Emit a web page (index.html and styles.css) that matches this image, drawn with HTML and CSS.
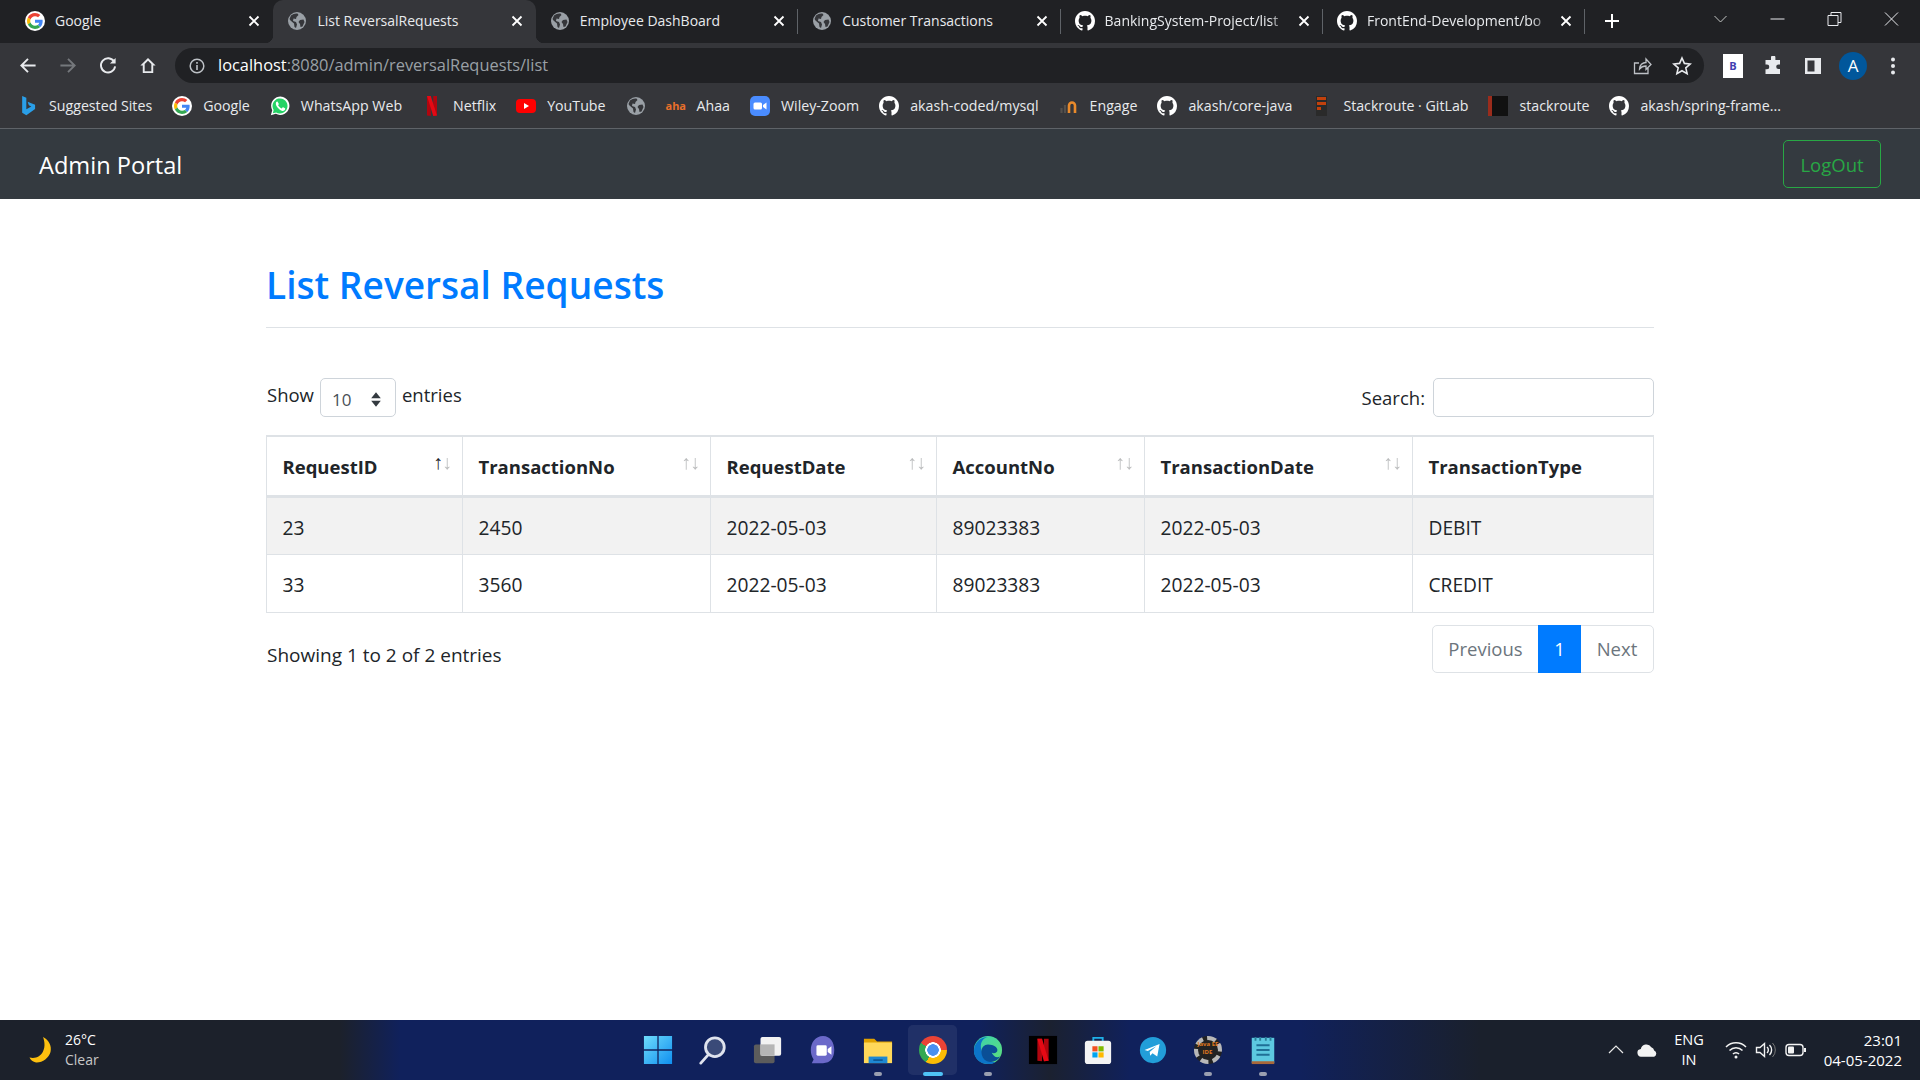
FILE: index.html
```html
<!DOCTYPE html>
<html lang="en">
<head>
<meta charset="UTF-8">
<meta name="viewport" content="width=device-width, initial-scale=1.0">
<title>List ReversalRequests</title>
<link rel="stylesheet" href="styles.css">
</head>
<body>
<svg class="defs" width="0" height="0">
    <symbol id="i-google" viewBox="-6 -6 60 60">
        <circle cx="24" cy="24" r="30" fill="#fff"/>
        <path fill="#ea4335" d="M24 9.5c3.54 0 6.71 1.22 9.21 3.6l6.85-6.85C35.9 2.38 30.47 0 24 0 14.62 0 6.51 5.38 2.56 13.22l7.98 6.19C12.43 13.72 17.74 9.5 24 9.5z"/>
        <path fill="#4285f4" d="M46.98 24.55c0-1.57-.15-3.09-.38-4.55H24v9.02h12.94c-.58 2.96-2.26 5.48-4.78 7.18l7.73 6c4.51-4.18 7.09-10.36 7.09-17.65z"/>
        <path fill="#fbbc05" d="M10.53 28.59c-.48-1.45-.76-2.99-.76-4.59s.27-3.14.76-4.59l-7.98-6.19C.92 16.46 0 20.12 0 24c0 3.88.92 7.54 2.56 10.78l7.97-6.19z"/>
        <path fill="#34a853" d="M24 48c6.48 0 11.93-2.13 15.89-5.81l-7.73-6c-2.15 1.45-4.92 2.3-8.16 2.3-6.26 0-11.57-4.22-13.47-9.91l-7.98 6.19C6.51 42.62 14.62 48 24 48z"/>
    </symbol>
    <symbol id="i-globe" viewBox="0 0 20 20">
        <circle cx="10" cy="10" r="9" fill="#9aa0a6"/>
        <path fill="#35363a" d="M4 4.5c2-1.800 4.500-2.400 6.500-2l1 1.500-2 2-.5 2-2.500-.5-.5 2.500 3 1 1 2.500-1 3.500-1.500-1-.5-3.500L3.500 9.500 2.500 8zM13 9l3.500-.5 1 2.500-2 4.500-2 .5-.5-3-1.500-2z"/>
    </symbol>
    <symbol id="i-github" viewBox="0 0 16 16">
        <path fill="#fff" d="M8 0C3.58 0 0 3.58 0 8c0 3.54 2.29 6.53 5.47 7.59.4.07.55-.17.55-.38 0-.19-.01-.82-.01-1.49-2.01.37-2.53-.49-2.69-.94-.09-.23-.48-.94-.82-1.13-.28-.15-.68-.52-.01-.53.63-.01 1.08.58 1.23.82.72 1.21 1.87.87 2.33.66.07-.52.28-.87.51-1.07-1.78-.2-3.64-.89-3.64-3.95 0-.87.31-1.59.82-2.15-.08-.2-.36-1.02.08-2.12 0 0 .67-.21 2.2.82.64-.18 1.32-.27 2-.27.68 0 1.36.09 2 .27 1.53-1.04 2.2-.82 2.2-.82.44 1.1.16 1.92.08 2.12.51.56.82 1.27.82 2.15 0 3.07-1.87 3.75-3.65 3.95.29.25.54.73.54 1.48 0 1.07-.01 1.93-.01 2.2 0 .21.15.46.55.38A8.013 8.013 0 0016 8c0-4.42-3.58-8-8-8z"/>
    </symbol>
    <symbol id="i-close" viewBox="0 0 12 12">
        <path d="M1.500 1.500l9 9M10.500 1.500l-9 9" stroke="#fff" stroke-width="1.800" fill="none"/>
    </symbol>
</svg>

<div class="browser-tabs">
    <div class="tab">
        <svg class="favicon"><use href="#i-google"/></svg>
        <span class="tab-title">Google</span>
        <svg class="tab-close"><use href="#i-close"/></svg>
    </div>
    <div class="tab tab-active">
        <svg class="favicon"><use href="#i-globe"/></svg>
        <span class="tab-title">List ReversalRequests</span>
        <svg class="tab-close"><use href="#i-close"/></svg>
    </div>
    <div class="tab tab-sep">
        <svg class="favicon"><use href="#i-globe"/></svg>
        <span class="tab-title">Employee DashBoard</span>
        <svg class="tab-close"><use href="#i-close"/></svg>
    </div>
    <div class="tab tab-sep">
        <svg class="favicon"><use href="#i-globe"/></svg>
        <span class="tab-title">Customer Transactions</span>
        <svg class="tab-close"><use href="#i-close"/></svg>
    </div>
    <div class="tab tab-sep">
        <svg class="favicon"><use href="#i-github"/></svg>
        <span class="tab-title tab-fade">BankingSystem-Project/list</span>
        <svg class="tab-close"><use href="#i-close"/></svg>
    </div>
    <div class="tab tab-sep">
        <svg class="favicon"><use href="#i-github"/></svg>
        <span class="tab-title tab-fade">FrontEnd-Development/bo</span>
        <svg class="tab-close"><use href="#i-close"/></svg>
    </div>
    <svg class="new-tab" viewBox="0 0 16 16"><path d="M8 1v14M1 8h14" stroke="#fff" stroke-width="2"/></svg>
    <div class="window-controls">
        <svg viewBox="0 0 14 14"><path d="M1 4l6 6 6-6" stroke="#c4c7c5" fill="none"/></svg>
        <svg viewBox="0 0 14 14"><path d="M0 7h14" stroke="#e8eaed"/></svg>
        <svg viewBox="0 0 14 14"><path d="M.5 3.500h10v10H.5zM3.500 3.500v-3h10v10h-3" stroke="#e8eaed" fill="none"/></svg>
        <svg viewBox="0 0 14 14"><path d="M.5.500l13 13M13.500.500l-13 13" stroke="#e8eaed" fill="none"/></svg>
    </div>
</div>

<div class="toolbar">
    <div class="nav-buttons">
        <svg viewBox="0 0 20 20"><path d="M18 10H3M10 3l-7 7 7 7" stroke="#e8eaed" stroke-width="2" fill="none"/></svg>
        <svg viewBox="0 0 20 20"><path d="M2 10h15M10 3l7 7-7 7" stroke="#75787c" stroke-width="2" fill="none"/></svg>
        <svg viewBox="0 0 20 20"><path d="M16.500 6A7.500 7.500 0 1 0 17.500 11" stroke="#e8eaed" stroke-width="2" fill="none"/><path d="M18 2v6h-6z" fill="#e8eaed"/></svg>
        <svg viewBox="0 0 20 20"><path d="M10 2L2 10h2.500v8h11v-8H18zM6.500 16V8.500L10 5l3.500 3.500V16z" fill="#e8eaed" fill-rule="evenodd"/></svg>
    </div>
    <div class="address-bar">
        <svg class="info-icon" viewBox="0 0 16 16"><circle cx="8" cy="8" r="6.800" stroke="#bdc1c6" stroke-width="1.500" fill="none"/><path d="M8 7v5M8 4v1.800" stroke="#bdc1c6" stroke-width="1.600"/></svg>
        <span class="url"><span class="url-host">localhost</span>:8080/admin/reversalRequests/list</span>
        <svg class="addr-icon" viewBox="0 0 20 20"><path d="M16 11v6.500H2.500V7H7M7.500 13c0-4 3-6.500 6.500-6.500V3l5 5.500-5 5V10c-3 0-5 1-6.500 3z" stroke="#bdc1c6" stroke-width="1.300" fill="none"/></svg>
        <svg class="addr-icon" viewBox="0 0 20 20"><path d="M10 2l2.400 5.400 5.800.6-4.400 3.900 1.300 5.700L10 14.700l-5.100 2.900 1.300-5.700L1.800 8l5.800-.6z" stroke="#e8eaed" stroke-width="1.600" fill="none"/></svg>
    </div>
    <div class="ext-buttons">
        <span class="ext-b">B</span>
        <svg viewBox="0 0 20 20"><path fill="#e8eaed" d="M8 1.500a2.200 2.200 0 0 1 4.400 0V4H17v4.500h-1.500a2.300 2.300 0 0 0 0 4.600H17V18H2.500v-4.800H4a2.300 2.300 0 0 0 0-4.600H2.500V4H8z"/></svg>
        <svg viewBox="0 0 20 20"><path fill="#e8eaed" fill-rule="evenodd" d="M2 2h16v16H2zM4.500 4.500v11h7v-11z"/></svg>
        <span class="avatar">A</span>
        <svg viewBox="0 0 20 20"><circle cx="10" cy="3.500" r="2" fill="#e8eaed"/><circle cx="10" cy="10" r="2" fill="#e8eaed"/><circle cx="10" cy="16.500" r="2" fill="#e8eaed"/></svg>
    </div>
</div>

<div class="bookmarks">
    <span class="bm"><svg viewBox="0 0 20 24"><path fill="#2a9fe8" d="M3 0l5 2v14l6-3.500-3-1.500-1.500-4 9 3.500v5L8 23l-5-3z"/></svg>Suggested Sites</span>
    <span class="bm"><svg><use href="#i-google"/></svg>Google</span>
    <span class="bm"><svg viewBox="0 0 24 24"><path fill="#fff" d="M1 23l1.700-6A11 11 0 1 1 7 21.300z"/><path fill="#25d366" d="M3.400 20.700l1-3.900A9 9 0 1 1 7.400 19.700z"/><path fill="#fff" d="M8.500 6.500c-.5 0-1.500 1-1.500 2.700s1.300 3.500 1.500 3.700c.2.300 2.500 4 6.200 5 2.200.3 3.300-1 3.500-2.200.1-.6 0-1-.2-1.100l-2.200-1.100c-.4-.1-.6 0-.8.300l-.9 1.100c-1.500-.3-3.500-2-4.400-3.800l.7-.9c.2-.3.2-.5.100-.8L9.100 7c-.1-.4-.3-.5-.6-.5z"/></svg>WhatsApp Web</span>
    <span class="bm"><svg viewBox="0 0 20 24"><path fill="#b1060f" d="M4 0h4.500v24L4 23.300zM11.500 0H16v23.300L11.500 24z"/><path fill="#e50914" d="M4 0h4.500l7.500 23.300L11.500 24z"/></svg>Netflix</span>
    <span class="bm"><svg viewBox="0 0 20 20"><rect y="3" width="20" height="14" rx="4" fill="#f00"/><path d="M8 7l5 3-5 3z" fill="#fff"/></svg>YouTube</span>
    <span class="bm"><svg><use href="#i-globe"/></svg></span>
    <span class="bm"><span class="aha-mark">aha</span>Ahaa</span>
    <span class="bm"><svg viewBox="0 0 20 20"><rect width="20" height="20" rx="5" fill="#4a8cff"/><rect x="3.500" y="6.500" width="8.500" height="7" rx="1.500" fill="#fff"/><path d="M13 9l3.500-2.500v7L13 11z" fill="#fff"/></svg>Wiley-Zoom</span>
    <span class="bm"><svg><use href="#i-github"/></svg>akash-coded/mysql</span>
    <span class="bm"><svg viewBox="0 0 20 20"><path d="M10 17V9.500a3 3 0 0 1 6 0V17" stroke="#e98a2b" stroke-width="2.600" fill="none"/><path d="M6 17V9M2.500 17v-5" stroke="#54504c" stroke-width="2.200"/></svg>Engage</span>
    <span class="bm"><svg><use href="#i-github"/></svg>akash/core-java</span>
    <span class="bm"><svg viewBox="0 0 20 20"><rect x="4" width="11" height="20" fill="#2a2a2a"/><path d="M5 1h9v3H5zM5 6h9v3H5zM5 11h4v3H5z" fill="#c2410c"/></svg>Stackroute · GitLab</span>
    <span class="bm"><svg viewBox="0 0 20 20"><rect width="20" height="20" fill="#111"/><rect width="4" height="20" fill="#9b2c1c"/></svg>stackroute</span>
    <span class="bm"><svg><use href="#i-github"/></svg>akash/spring-frame...</span>
</div>

<nav class="navbar">
    <a class="navbar-brand">Admin Portal</a>
    <a class="btn-logout">LogOut</a>
</nav>

<main class="content">
    <h1 class="page-title">List Reversal Requests</h1>
    <hr class="divider">

    <div class="table-controls">
        <div class="length-control">
            <span>Show</span>
            <span class="length-select">
                <span>10</span>
                <svg viewBox="0 0 10 14"><path d="M5 1l4 5H1zM5 13L1 8h8z" fill="#343a40"/></svg>
            </span>
            <span>entries</span>
        </div>
        <div class="search-control">
            <span>Search:</span>
            <input class="search-input" type="text">
        </div>
    </div>

    <table class="data-table">
        <colgroup>
            <col class="col-a"><col class="col-b"><col class="col-c"><col class="col-d"><col class="col-e"><col class="col-f">
        </colgroup>
        <thead>
            <tr>
                <th class="sorting sorting-asc">RequestID</th>
                <th class="sorting">TransactionNo</th>
                <th class="sorting">RequestDate</th>
                <th class="sorting">AccountNo</th>
                <th class="sorting">TransactionDate</th>
                <th>TransactionType</th>
            </tr>
        </thead>
        <tbody>
            <tr class="row-odd">
                <td>23</td><td>2450</td><td>2022-05-03</td><td>89023383</td><td>2022-05-03</td><td>DEBIT</td>
            </tr>
            <tr>
                <td>33</td><td>3560</td><td>2022-05-03</td><td>89023383</td><td>2022-05-03</td><td>CREDIT</td>
            </tr>
        </tbody>
    </table>

    <div class="table-footer">
        <div class="table-info">Showing 1 to 2 of 2 entries</div>
        <ul class="pagination">
            <li class="page-prev">Previous</li>
            <li class="page-current">1</li>
            <li class="page-next">Next</li>
        </ul>
    </div>
</main>

<footer class="taskbar">
    <div class="weather">
        <svg viewBox="0 0 24 28"><path fill="#fdc00f" d="M14 1c6 3 9 9 7.500 15S13 27 7 26.500C4 26 1.500 24 .5 21.500c6 1.500 11-1 13.500-6S15.500 5 14 1z"/></svg>
        <div class="weather-text">
            <div>26°C</div>
            <div class="weather-sub">Clear</div>
        </div>
    </div>

    <div class="task-icons">
        <span class="task-icon"><svg viewBox="0 0 32 32"><defs><linearGradient id="w" x1="0" y1="0" x2="1" y2="1"><stop offset="0" stop-color="#6fdcfb"/><stop offset="1" stop-color="#0f8ff0"/></linearGradient></defs><path fill="url(#w)" d="M1 1h14.300v14.300H1zM16.700 1H31v14.300H16.700zM1 16.700h14.300V31H1zM16.700 16.700H31V31H16.700z"/></svg></span>
        <span class="task-icon"><svg viewBox="0 0 32 32"><circle cx="18" cy="13" r="10" fill="#3a4a78" stroke="#dfe3ee" stroke-width="3"/><path d="M11 21l-8 9" stroke="#dfe3ee" stroke-width="3" stroke-linecap="round"/></svg></span>
        <span class="task-icon"><svg viewBox="0 0 32 32"><rect x="1" y="10" width="22" height="20" rx="2" fill="#5c5c5c"/><rect x="8" y="2" width="22" height="20" rx="2" fill="#f2f2f2"/><rect x="8" y="10" width="15" height="12" fill="#b5b5b5"/></svg></span>
        <span class="task-icon"><svg viewBox="0 0 32 32"><path fill="#6b69c9" d="M16 1c8 0 12 7 12 15s-4 14-12 14H4l2-4c-2-3-3-6-3-10C3 8 8 1 16 1z"/><rect x="9" y="11" width="11" height="11" rx="1.500" fill="#fff"/><path d="M21 15l4-3v9l-4-3z" fill="#fff"/></svg></span>
        <span class="task-icon task-running"><svg viewBox="0 0 32 32"><path fill="#e0a100" d="M1 4h11l3 3h16v6H1z"/><path fill="#ffd85a" d="M1 8h30v22H1z"/><rect x="6" y="23" width="20" height="7" fill="#1e88d2"/><rect x="11" y="26" width="10" height="1.500" fill="#0c4d86"/></svg></span>
        <span class="task-icon task-active"><span class="chrome-logo"></span></span>
        <span class="task-icon task-running"><svg viewBox="0 0 32 32"><defs><linearGradient id="e" x1="0" y1="0" x2="1" y2="1"><stop offset="0" stop-color="#3ad0b0"/><stop offset="1" stop-color="#5fe07a"/></linearGradient></defs><circle cx="16" cy="16" r="15" fill="url(#e)"/><path fill="#0c74c9" d="M1 17C1 8 8 2 16 2c-6 1-9 7-7 14s8 13 15 13c-3 2-6 2-8 2C8 31 1 25 1 17z"/><path fill="#0a4f96" d="M16 10c6 0 10 3 10 6s-3 4-6 3c2 4 5 6 9 4-3 5-9 7-14 5-4-2-6-6-6-10 0-5 3-8 7-8z"/></svg></span>
        <span class="task-icon"><svg viewBox="0 0 32 32"><rect x="1" y="1" width="30" height="30" fill="#000"/><path fill="#b1060f" d="M10 4h5v24l-5-.5zM17 4h5v23.500l-5 .5z"/><path fill="#e50914" d="M10 4h5l7 23.500-5 .5z"/></svg></span>
        <span class="task-icon"><svg viewBox="0 0 32 32"><path d="M11 7V3h10v4" stroke="#1fb0e8" stroke-width="2" fill="none"/><rect x="2" y="6" width="28" height="25" rx="3" fill="#f4f4f4"/><path fill="#f25022" d="M10 12h5.500v5.500H10z"/><path fill="#7fba00" d="M16.500 12H22v5.500h-5.500z"/><path fill="#00a4ef" d="M10 18.500h5.500V24H10z"/><path fill="#ffb900" d="M16.500 18.500H22V24h-5.500z"/></svg></span>
        <span class="task-icon"><svg viewBox="0 0 32 32"><circle cx="16" cy="16" r="14" fill="#229ed9"/><path fill="#fff" d="M7 16l16-6.500-2.500 13.500-5-3.500-2.500 2.500-.5-4 7-6-9 5z"/></svg></span>
        <span class="task-icon task-running"><span class="java-gear">Java EE<br>IDE</span></span>
        <span class="task-icon task-running"><svg viewBox="0 0 32 32"><rect x="4" y="3" width="24" height="27" fill="#5cc8e0"/><path d="M8 2v4M13 2v4M19 2v4M24 2v4" stroke="#2a7f99" stroke-width="2"/><rect x="4" y="28" width="24" height="3" fill="#a8683a"/><path d="M9 11h14M9 16h14M9 21h14" stroke="#1f6f96" stroke-width="2.200"/></svg></span>
    </div>

    <div class="tray">
        <svg class="tray-chevron" viewBox="0 0 16 10"><path d="M1 8l7-7 7 7" stroke="#e8e8e8" fill="none" stroke-width="1.200"/></svg>
        <svg class="tray-cloud" viewBox="0 0 22 14"><path fill="#f2f2f2" d="M5 14a4 4 0 0 1-1-8 6 6 0 0 1 11-2 4.500 4.500 0 0 1 3 3.500A3.500 3.500 0 0 1 18 14z"/></svg>
        <div class="tray-lang"><div>ENG</div><div>IN</div></div>
        <svg class="tray-icon" viewBox="0 0 22 18"><path d="M1 6a14 14 0 0 1 20 0M4.500 9.500a9 9 0 0 1 13 0M8 13a4 4 0 0 1 6 0" stroke="#f2f2f2" fill="none" stroke-width="1.500"/><circle cx="11" cy="16" r="1.500" fill="#f2f2f2"/></svg>
        <svg class="tray-icon" viewBox="0 0 22 18"><path d="M1.500 6.500h3.500l4.500-4v13l-4.500-4H1.500z" stroke="#f2f2f2" fill="none" stroke-width="1.400"/><path d="M12 6a4 4 0 0 1 0 6M14.500 4a7 7 0 0 1 0 10" stroke="#f2f2f2" fill="none" stroke-width="1.400"/><path d="M17.500 2a10 10 0 0 1 0 14" stroke="#777" fill="none"/></svg>
        <svg class="tray-icon" viewBox="0 0 22 14"><rect x="1" y="1.500" width="17" height="11" rx="3" stroke="#f2f2f2" fill="none" stroke-width="1.400"/><rect x="3" y="3.500" width="6" height="7" rx="1" fill="#f2f2f2"/><rect x="19" y="5" width="2" height="4" fill="#f2f2f2"/></svg>
        <div class="tray-clock"><div>23:01</div><div>04-05-2022</div></div>
    </div>
</footer>
</body>
</html>
```

FILE: styles.css
```css
* {
    box-sizing: border-box;
}

body {
    margin: 0;
    height: 100vh;
    display: flex;
    flex-direction: column;
    overflow: hidden;
    font-family: "Open Sans", "Liberation Sans", sans-serif;
    background-color: #fff;
    color: #212529;
}

.defs {
    position: absolute;
}

/* browser chrome */
.browser-tabs {
    height: 43px;
    flex: none;
    display: flex;
    padding-left: 11px;
    background-color: #202124;
    color: #e8eaed;
    font-size: 14px;
}

.tab {
    width: 262.4px;
    height: 43px;
    display: flex;
    align-items: center;
    gap: 10px;
    padding: 0 13px 2px 14px;
    flex: none;
}

.tab-sep {
    background: linear-gradient(#5f6368, #5f6368) right center / 1px 25px no-repeat;
}

.tab-active {
    position: relative;
    background-color: #35363a;
    border-radius: 10px 10px 0 0;
}

.tab-active::before,
.tab-active::after {
    content: "";
    position: absolute;
    bottom: 0;
    width: 8px;
    height: 8px;
}

.tab-active::before {
    left: -8px;
    background: radial-gradient(circle at 0 0, transparent 8px, #35363a 8.500px);
}

.tab-active::after {
    right: -8px;
    background: radial-gradient(circle at 100% 0, transparent 8px, #35363a 8.500px);
}

.favicon {
    width: 20px;
    height: 20px;
    flex: none;
}

.tab-title {
    flex: 1;
    white-space: nowrap;
}

.tab-fade {
    -webkit-mask-image: linear-gradient(to right, #000 90%, transparent);
    mask-image: linear-gradient(to right, #000 90%, transparent);
}

.tab-close {
    width: 12px;
    height: 12px;
    flex: none;
}

.new-tab {
    width: 16px;
    height: 16px;
    margin: 13px 0 0 19px;
    flex: none;
}

.window-controls {
    margin-left: auto;
    display: flex;
    align-items: flex-start;
}

.window-controls svg {
    width: 57px;
    height: 14px;
    margin-top: 12px;
}

.toolbar {
    height: 45px;
    flex: none;
    display: flex;
    align-items: center;
    padding-left: 8px;
    background-color: #35363a;
}

.nav-buttons {
    display: flex;
    margin-right: 7px;
}

.nav-buttons svg {
    width: 40px;
    height: 19px;
}

.address-bar {
    width: 1529px;
    height: 35px;
    display: flex;
    align-items: center;
    padding: 0 12px 2px 14px;
    background-color: #202124;
    border-radius: 18px;
    font-size: 16.4px;
    color: #9aa0a6;
}

.info-icon {
    width: 16px;
    height: 16px;
    margin: 2px 13px 0 0;
}

.url {
    flex: 1;
}

.url-host {
    color: #fff;
}

.addr-icon {
    width: 20px;
    height: 20px;
    margin: 2px 0 0 20px;
    flex: none;
}

.ext-buttons {
    display: flex;
    align-items: center;
    margin-left: 8px;
}

.ext-buttons > * {
    width: 40px;
    height: 20px;
    flex: none;
}

.ext-b {
    width: 20px !important;
    height: 24px !important;
    margin: 0 10px 0 11px;
    background-color: #fff;
    color: #4040b0;
    font-size: 11px;
    font-weight: 700;
    text-align: center;
    line-height: 24px;
}

.avatar {
    width: 28px !important;
    height: 28px !important;
    margin: 0 6px;
    border-radius: 50%;
    background-color: #01579b;
    color: #fff;
    font-size: 17px;
    text-align: center;
    line-height: 28px;
}

.bookmarks {
    height: 41px;
    flex: none;
    display: flex;
    align-items: center;
    gap: 20px;
    padding: 0 0 5px 18px;
    background-color: #35363a;
    border-bottom: 1px solid #5f6368;
    color: #e8eaed;
    font-size: 14.2px;
    white-space: nowrap;
}

.bm {
    display: flex;
    align-items: center;
    gap: 11px;
}

.bm svg {
    width: 20px;
    height: 20px;
    flex: none;
}

.aha-mark {
    width: 20px;
    color: #e9702a;
    font-size: 11px;
    font-weight: 700;
    text-align: center;
}

/* page navbar */
.navbar {
    height: 70px;
    flex: none;
    display: flex;
    align-items: center;
    justify-content: space-between;
    padding: 0 39px;
    background-color: #343a40;
}

.navbar-brand {
    padding-top: 2px;
    color: #fff;
    font-size: 23.6px;
}

.btn-logout {
    width: 98px;
    height: 48px;
    display: flex;
    align-items: center;
    justify-content: center;
    border: 1px solid #28a745;
    border-radius: 5px;
    color: #28a745;
    font-size: 18.5px;
}

/* main content */
.content {
    flex: 1;
    width: 1388px;
    margin: 0 auto;
    padding-top: 56px;
    font-size: 18.5px;
}

.page-title {
    margin: 0;
    color: #007bff;
    font-size: 37.1px;
    font-weight: 600;
    line-height: 60px;
}

.divider {
    margin: 12px 0 0;
    border: none;
    border-top: 1px solid #dee2e6;
}

.table-controls {
    display: flex;
    justify-content: space-between;
    margin-top: 50px;
}

.length-control {
    display: flex;
    align-items: flex-start;
    gap: 6px;
    padding-left: 1px;
    line-height: 34px;
}

.length-select {
    width: 76px;
    height: 39px;
    display: flex;
    align-items: center;
    justify-content: space-between;
    padding: 4px 13px 0 11px;
    border: 1px solid #ced4da;
    border-radius: 5px;
    color: #495057;
    font-size: 17px;
}

.length-select svg {
    width: 12px;
    height: 17px;
}

.search-control {
    display: flex;
    align-items: center;
    gap: 8px;
}

.search-input {
    width: 221px;
    height: 39px;
    border: 1px solid #ced4da;
    border-radius: 5px;
}

.data-table {
    width: 1387px;
    margin-top: 18px;
    border-collapse: collapse;
    table-layout: fixed;
    border: 1px solid #dee2e6;
}

.col-a { width: 196px; }
.col-b { width: 248px; }
.col-c { width: 226px; }
.col-d { width: 208px; }
.col-e { width: 268px; }
.col-f { width: 241px; }

.data-table th,
.data-table td {
    padding: 0 15.5px;
    border: 1px solid #dee2e6;
    text-align: left;
    white-space: nowrap;
}

.data-table th {
    position: relative;
    height: 60px;
    padding-top: 2px;
    border-top-width: 2px;
    border-bottom-width: 3px;
    font-weight: 700;
}

.data-table td {
    height: 58px;
    padding-top: 3px;
    font-size: 19.2px;
}

.row-odd td {
    background-color: #f2f2f2;
}

.sorting::before,
.sorting::after {
    position: absolute;
    top: 13px;
    font-weight: 400;
    font-size: 20px;
    line-height: 24px;
    opacity: 0.3;
}

.sorting::before {
    content: "\2191";
    right: 19px;
}

.sorting::after {
    content: "\2193";
    right: 10px;
}

.sorting-asc::before {
    opacity: 1;
}

.table-footer {
    display: flex;
    justify-content: space-between;
    margin-top: 12px;
}

.table-info {
    padding: 17px 0 0 1px;
    font-size: 19px;
}

.pagination {
    display: flex;
    height: 48px;
    margin: 0;
    padding: 0;
    list-style: none;
    border: 1px solid #dee2e6;
    border-radius: 5px;
    color: #6c757d;
    line-height: 46px;
}

.page-prev {
    width: 105px;
    text-align: center;
}

.page-current {
    width: 43px;
    margin: -1px 0;
    height: 48px;
    line-height: 48px;
    background-color: #007bff;
    color: #fff;
    text-align: center;
}

.page-next {
    width: 72px;
    text-align: center;
}

/* windows taskbar */
.taskbar {
    height: 60px;
    flex: none;
    display: grid;
    grid-template-columns: 1fr auto 1fr;
    align-items: center;
    background: linear-gradient(to right, #1c212b 0, #1c212b 340px, #10215c 400px, #10215c 980px, #1b2130 1050px, #10215c 1130px, #10215c 1300px, #1a202c 1480px);
    color: #fff;
    font-size: 14px;
}

.weather {
    display: flex;
    align-items: center;
    gap: 12px;
    padding-left: 29px;
}

.weather svg {
    width: 24px;
    height: 28px;
}

.weather-text {
    line-height: 20px;
}

.weather-sub {
    color: #c8c8c8;
}

.task-icons {
    display: flex;
}

.task-icon {
    position: relative;
    width: 55px;
    height: 60px;
    display: flex;
    align-items: center;
    justify-content: center;
}

.task-icon svg {
    width: 30px;
    height: 30px;
}

.task-running::after,
.task-active::after {
    content: "";
    position: absolute;
    bottom: 4px;
    left: 50%;
    width: 8px;
    height: 4px;
    margin-left: -4px;
    border-radius: 2px;
    background-color: #9a9fb0;
}

.task-active::after {
    width: 20px;
    margin-left: -10px;
    background-color: #4fc3f7;
}

.task-active::before {
    content: "";
    position: absolute;
    left: 3px;
    right: 3px;
    top: 5px;
    bottom: 5px;
    border-radius: 5px;
    background-color: rgba(255, 255, 255, 0.07);
}

.chrome-logo {
    position: relative;
    width: 28px;
    height: 28px;
    border-radius: 50%;
    background: radial-gradient(circle, #4a90f0 0 5.500px, #fff 6px 7.500px, transparent 8px), conic-gradient(from -60deg, #ea4335 0 150deg, #fbbc05 0 270deg, #34a853 0);
}

.java-gear {
    width: 28px;
    height: 28px;
    border-radius: 50%;
    border: 4px dashed #b8b8b8;
    background-color: #222;
    color: #e07a1f;
    font-size: 6px;
    font-weight: 700;
    line-height: 8px;
    text-align: center;
    white-space: nowrap;
}

.tray {
    display: flex;
    align-items: center;
    justify-content: flex-end;
    padding-right: 18px;
}

.tray-chevron {
    width: 16px;
    height: 10px;
    margin-right: 13px;
}

.tray-cloud {
    width: 21px;
    height: 14px;
    margin-right: 7px;
}

.tray-lang {
    width: 48px;
    margin-right: 12px;
    font-size: 14.5px;
    line-height: 20px;
    text-align: center;
}

.tray-icon {
    width: 22px;
    height: 18px;
    margin-right: 8px;
}

.tray-clock {
    width: 87px;
    font-size: 15px;
    line-height: 20px;
    text-align: right;
}
```
